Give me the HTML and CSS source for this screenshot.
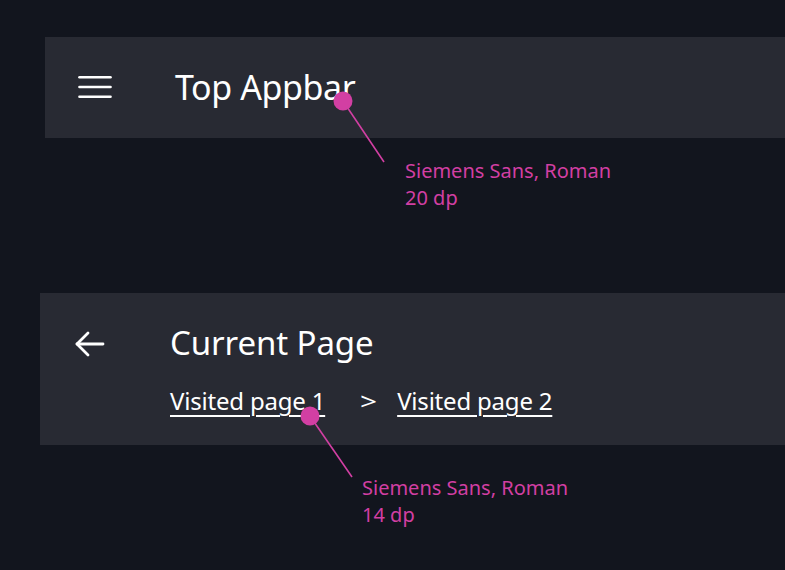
FILE: index.html
```html
<!DOCTYPE html>
<html>
<head>
<meta charset="utf-8">
<link rel="stylesheet" href="styles.css">
</head>
<body>
<div class="page">
  <div class="bar bar-top">
    <svg class="icon-menu" width="34" height="24" viewBox="0 0 34 24">
      <g stroke="#ffffff" stroke-width="2.6" stroke-linecap="round">
        <line x1="1.5" y1="2.3" x2="32.5" y2="2.3"/>
        <line x1="1.5" y1="12" x2="32.5" y2="12"/>
        <line x1="1.5" y1="21.7" x2="32.5" y2="21.7"/>
      </g>
    </svg>
    <div class="title">Top Appbar</div>
  </div>

  <div class="bar bar-crumb">
    <svg class="icon-back" width="30" height="26" viewBox="0 0 30 26">
      <g stroke="#ffffff" stroke-width="2.8" stroke-linecap="round" stroke-linejoin="round" fill="none">
        <line x1="2" y1="13" x2="28" y2="13"/>
        <polyline points="13,2 2,13 13,24"/>
      </g>
    </svg>
    <div class="crumb-col">
      <div class="title">Current Page</div>
      <div class="crumbs">
        <a class="crumb">Visited page 1</a>
        <span class="sep">&gt;</span>
        <a class="crumb">Visited page 2</a>
      </div>
    </div>
  </div>
</div>

<div class="anno anno-1">
  <svg class="anno-line" width="60" height="80" viewBox="0 0 60 80">
    <line x1="10" y1="10" x2="51" y2="71" stroke="#d23fa3" stroke-width="1.6"/>
    <circle cx="10" cy="10" r="9.5" fill="#d23fa3"/>
  </svg>
  <div class="anno-text">Siemens Sans, Roman<br>20 dp</div>
</div>

<div class="anno anno-2">
  <svg class="anno-line" width="60" height="80" viewBox="0 0 60 80">
    <line x1="10" y1="10" x2="52" y2="71" stroke="#d23fa3" stroke-width="1.6"/>
    <circle cx="10" cy="10" r="9.5" fill="#d23fa3"/>
  </svg>
  <div class="anno-text">Siemens Sans, Roman<br>14 dp</div>
</div>
</body>
</html>
```

FILE: styles.css
```css
html, body {
  margin: 0;
  padding: 0;
  background: #12151e;
  width: 785px;
  height: 570px;
  overflow: hidden;
  font-family: "Noto Sans", "Open Sans", sans-serif;
  color: #ffffff;
}

.page {
  padding-top: 37px;
  display: flex;
  flex-direction: column;
  gap: 155px;
}

.bar {
  background: #282a33;
  display: flex;
}

.bar-top {
  margin-left: 45px;
  height: 101px;
  align-items: center;
  padding-left: 33px;
}

.bar-top .icon-menu {
  display: block;
  margin-top: -2px;
}

.bar-top .title {
  margin-left: 63px;
  margin-top: -2px;
  font-size: 34px;
  line-height: 40px;
  letter-spacing: -0.4px;
}

.bar-crumb {
  margin-left: 40px;
  height: 152px;
  padding-left: 35px;
  align-items: flex-start;
}

.bar-crumb .icon-back {
  display: block;
  margin-top: 38px;
}

.crumb-col {
  margin-left: 65px;
  padding-top: 28px;
  display: flex;
  flex-direction: column;
}

.crumb-col .title {
  font-size: 33px;
  line-height: 44px;
  letter-spacing: -0.1px;
}

.crumbs {
  margin-top: 21px;
  display: flex;
  align-items: baseline;
  font-size: 24px;
  line-height: 30px;
  letter-spacing: -0.2px;
}

.crumb {
  text-decoration: underline;
  text-decoration-thickness: 2px;
  text-underline-offset: 5px;
  text-decoration-skip-ink: auto;
}

.sep {
  margin-left: 37px;
  margin-right: 22px;
  font-size: 23px;
  transform: scaleX(1.3);
}

.anno {
  position: absolute;
  display: block;
}

.anno-line {
  position: absolute;
  left: 0;
  top: 0;
  display: block;
}

.anno-1 { left: 333px; top: 91px; }
.anno-2 { left: 300px; top: 406px; }

.anno-text {
  position: absolute;
  white-space: nowrap;
  color: #d23fa3;
  font-size: 20px;
  line-height: 27px;
}

.anno-1 .anno-text { left: 72px; top: 66px; }
.anno-2 .anno-text { left: 62px; top: 68px; }
```
